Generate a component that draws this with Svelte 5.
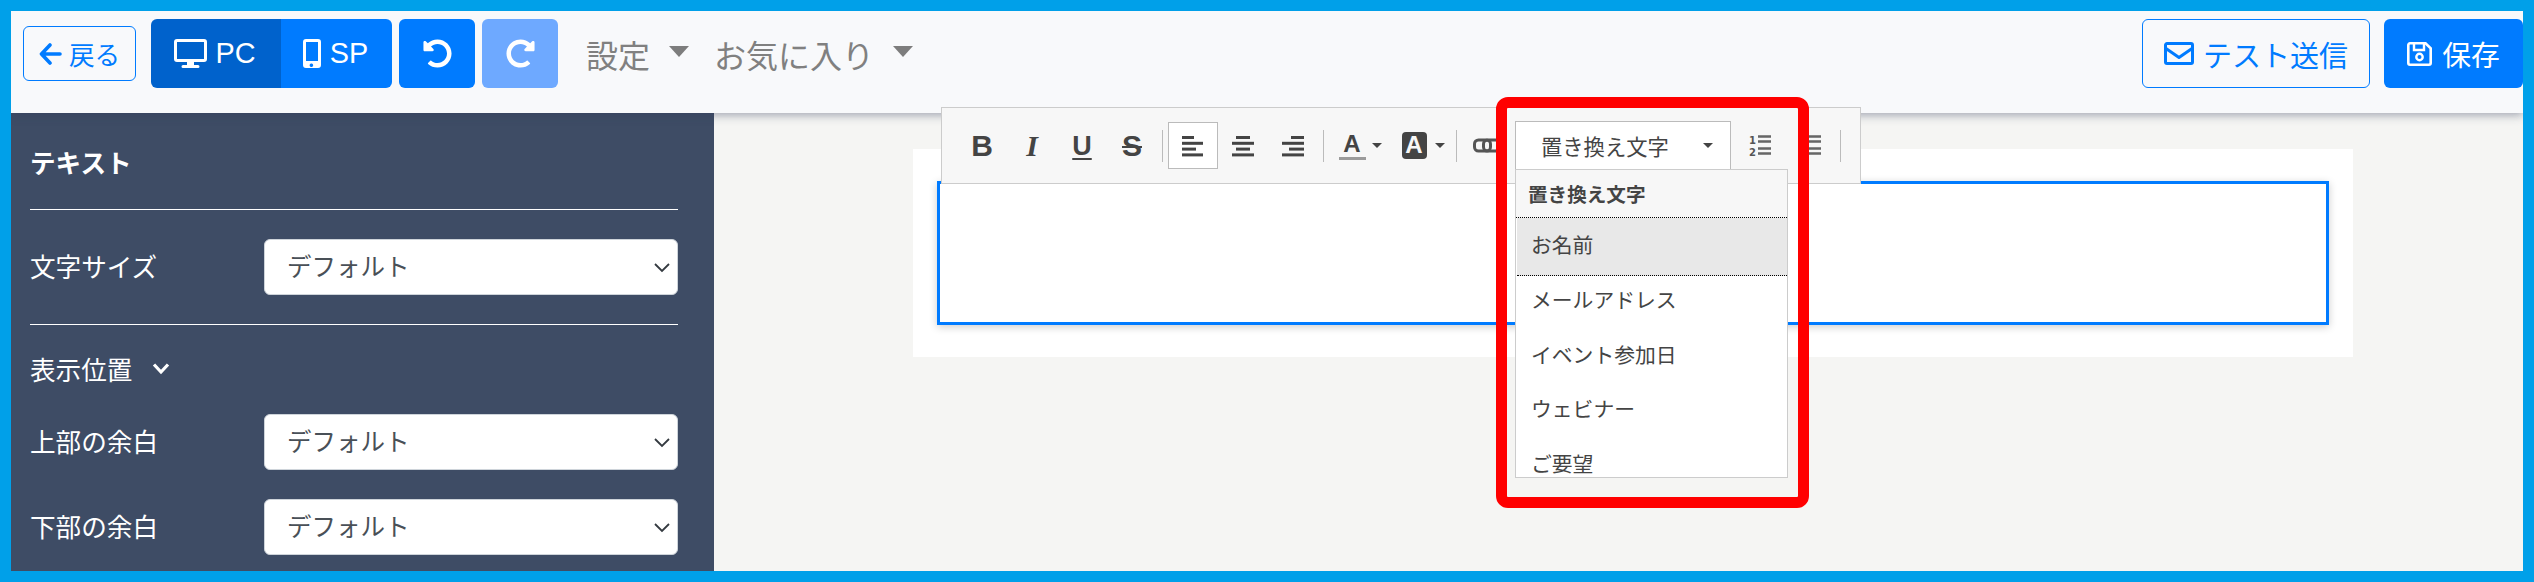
<script>
  const undoPath =
    "M255.545 8c-66.269.119-126.438 26.233-170.86 68.685L48.971 40.971C33.851 25.851 8 36.559 8 57.941V192c0 13.255 10.745 24 24 24h134.059c21.382 0 32.09-25.851 16.971-40.971l-41.75-41.75c30.864-28.899 70.801-44.907 113.23-45.273 92.398-.798 170.283 73.977 169.484 169.442C423.236 348.009 349.816 424 256 424c-41.127 0-79.997-14.678-110.63-41.556-4.743-4.161-11.906-3.908-16.368.553L89.34 422.659c-4.872 4.872-4.631 12.815.482 17.433C133.798 479.813 192.074 504 256 504c136.966 0 247.999-111.033 248-247.998C504.001 119.193 392.354 7.755 255.545 8z";

  const menuItems = ["メールアドレス", "イベント参加日", "ウェビナー", "ご要望"];

  const aligns = [
    { x: [0, 0, 0, 0], w: [12, 21, 14, 21], active: true },
    { x: [4, 0, 4, 0], w: [14, 22, 14, 22], active: false },
    { x: [9, 0, 7, 0], w: [13, 22, 15, 22], active: false },
  ];
</script>

<div class="page">
  <header class="navbar">
    <button class="btn outline back">
      <svg width="23" height="22" viewBox="0 0 23 22"><path d="M11 2 2.5 11l8.5 9M3 11h18" fill="none" stroke="currentColor" stroke-width="3.6" stroke-linecap="round" stroke-linejoin="round" /></svg>
      戻る
    </button>

    <div class="device">
      <button class="btn solid pc">
        <svg width="33" height="29" viewBox="0 0 33 29"><path d="M3 0h27a3 3 0 0 1 3 3v17a3 3 0 0 1-3 3H20v3h4a1.500 1.500 0 0 1 0 3H9a1.500 1.500 0 0 1 0-3h4v-3H3a3 3 0 0 1-3-3V3a3 3 0 0 1 3-3Zm0 3v17h27V3Z" fill="currentColor" fill-rule="evenodd" /></svg>
        PC
      </button>
      <button class="btn solid sp">
        <svg width="18" height="29" viewBox="0 0 18 29"><path d="M3 0h12a3 3 0 0 1 3 3v23a3 3 0 0 1-3 3H3a3 3 0 0 1-3-3V3a3 3 0 0 1 3-3Zm0 3v19h12V3Zm6 21.500a1.800 1.800 0 1 0 0 3.400 1.800 1.800 0 0 0 0-3.400Z" fill="currentColor" fill-rule="evenodd" /></svg>
        SP
      </button>
    </div>

    <button class="btn solid history">
      <svg width="29" height="29" viewBox="0 0 512 512"><path d={undoPath} fill="currentColor" /></svg>
    </button>
    <button class="btn solid history disabled">
      <svg class="flip" width="29" height="29" viewBox="0 0 512 512"><path d={undoPath} fill="currentColor" /></svg>
    </button>

    <div class="nav-menu first">設定<i class="nav-caret"></i></div>
    <div class="nav-menu">お気に入り<i class="nav-caret"></i></div>

    <button class="btn outline test">
      <svg width="30" height="23" viewBox="0 0 30 23"><path d="M3 1.500h24A1.500 1.500 0 0 1 28.500 3v17a1.500 1.500 0 0 1-1.500 1.500H3A1.500 1.500 0 0 1 1.500 20V3A1.500 1.500 0 0 1 3 1.500Zm-1 5 13 9 13-9" fill="none" stroke="currentColor" stroke-width="3" stroke-linejoin="round" /></svg>
      テスト送信
    </button>
    <button class="btn solid save">
      <svg width="25" height="24" viewBox="0 0 25 24"><path d="M3 1.300h15.500l5.200 5V21a1.700 1.700 0 0 1-1.700 1.700H3A1.700 1.700 0 0 1 1.300 21V3A1.700 1.700 0 0 1 3 1.300Z" fill="none" stroke="currentColor" stroke-width="2.600" /><path d="M7 2v6h10V2" fill="none" stroke="currentColor" stroke-width="2.400" /><circle cx="12.500" cy="15" r="3.200" fill="none" stroke="currentColor" stroke-width="2.400" /></svg>
      保存
    </button>
  </header>

  <div class="body">
    <aside class="sidebar">
      <h2>テキスト</h2>
      <hr />
      <div class="row">
        <span class="label">文字サイズ</span>
        <div class="select"><select><option>デフォルト</option></select><svg width="16" height="10" viewBox="0 0 16 10"><path d="M1 1l7 7 7-7" fill="none" stroke="#343a40" stroke-width="1.800" /></svg></div>
      </div>
      <hr class="second" />
      <div class="collapse">
        表示位置
        <svg width="18" height="13" viewBox="0 0 18 13"><path d="M2 2.500l7 7.500 7-7.500" fill="none" stroke="#fff" stroke-width="3.200" /></svg>
      </div>
      <div class="row">
        <span class="label">上部の余白</span>
        <div class="select"><select><option>デフォルト</option></select><svg width="16" height="10" viewBox="0 0 16 10"><path d="M1 1l7 7 7-7" fill="none" stroke="#343a40" stroke-width="1.800" /></svg></div>
      </div>
      <div class="row last">
        <span class="label">下部の余白</span>
        <div class="select"><select><option>デフォルト</option></select><svg width="16" height="10" viewBox="0 0 16 10"><path d="M1 1l7 7 7-7" fill="none" stroke="#343a40" stroke-width="1.800" /></svg></div>
      </div>
    </aside>

    <main class="main">
      <div class="card">
        <div class="editable"></div>
      </div>

      <div class="toolbar">
        <span class="tool"><span class="glyph b">B</span></span>
        <span class="tool"><span class="glyph i">I</span></span>
        <span class="tool"><span class="glyph u">U</span></span>
        <span class="tool"><span class="glyph s">S</span></span>
        <i class="sep"></i>
        {#each aligns as a}
          <span class="tool" class:active={a.active}>
            <svg width="22" height="22" viewBox="0 0 22 22">
              {#each a.w as w, n}
                <rect x={a.x[n]} y={n * 5.8 + 1} width={w} height="3" fill="#444" />
              {/each}
            </svg>
          </span>
        {/each}
        <i class="sep"></i>
        <span class="tool color fore"><span class="glyph a">A</span><i class="caret"></i></span>
        <span class="tool color backc"><span class="glyph a box">A</span><i class="caret"></i></span>
        <i class="sep"></i>
        <span class="tool">
          <svg width="28" height="16" viewBox="0 0 28 16"><rect x="1.500" y="2" width="16" height="11" rx="4" fill="none" stroke="#555" stroke-width="3" /><rect x="10.500" y="2" width="16" height="11" rx="4" fill="none" stroke="#555" stroke-width="3" /></svg>
        </span>

        <div class="dropdown">
          <button class="drop-btn">置き換え文字<i class="caret"></i></button>
          <div class="drop-menu">
            <div class="drop-head">置き換え文字</div>
            <div class="drop-item selected">お名前</div>
            {#each menuItems as item}
              <div class="drop-item">{item}</div>
            {/each}
          </div>
        </div>

        <span class="tool list">
          <svg width="25" height="24" viewBox="0 0 25 24">
            <text x="2" y="10" class="num">1</text>
            <text x="2" y="22" class="num">2</text>
            <path d="M11 2.500h13M11 7.500h13M11 14.500h13M11 19.500h13" stroke="#666" stroke-width="2.400" />
          </svg>
        </span>
        <span class="tool list">
          <svg width="25" height="24" viewBox="0 0 25 24">
            <path d="M10 2.500h14M10 7.500h14M10 14.500h14M10 19.500h14" stroke="#666" stroke-width="2.400" />
          </svg>
        </span>
        <i class="sep end"></i>
      </div>
    </main>
  </div>

  <!-- annotation frame from the manual -->
  <div class="highlight"></div>
</div>

<style>
  :global(body) {
    margin: 0;
  }

  .page {
    position: relative;
    box-sizing: border-box;
    width: 2534px;
    height: 582px;
    border: 11px solid #00a0e9;
    font-family: "Liberation Sans", "Noto Sans CJK JP", sans-serif;
    overflow: hidden;
  }

  .navbar {
    position: relative;
    z-index: 1;
    box-sizing: border-box;
    height: 102px;
    display: flex;
    align-items: flex-start;
    padding: 8px 0 0 12px;
    background: #f8f9fb;
    box-shadow: 0 2px 9px rgba(50, 60, 90, 0.45);
  }

  .btn {
    display: flex;
    align-items: center;
    justify-content: center;
    box-sizing: border-box;
    height: 69px;
    padding: 0;
    border: 0;
    border-radius: 6px;
    font-family: inherit;
    font-size: 28.8px;
    cursor: pointer;
  }

  .solid {
    background: #007bff;
    color: #fff;
  }

  .outline {
    background: transparent;
    border: 1px solid #007bff;
    color: #007bff;
  }

  .back {
    width: 113px;
    height: 55px;
    margin-top: 7px;
    gap: 7px;
    font-size: 25.6px;
  }

  .device {
    display: flex;
    margin-left: 15px;
    width: 241px;
  }

  .pc {
    width: 130px;
    gap: 8px;
    padding-right: 2px;
    background: #0062cc;
    border-radius: 6px 0 0 6px;
  }

  .sp {
    width: 111px;
    gap: 9px;
    padding-right: 2px;
    border-radius: 0 6px 6px 0;
  }

  .history {
    width: 76px;
    margin-left: 7px;
  }

  .disabled {
    background: #6ea9ff;
  }

  .flip {
    transform: scaleX(-1);
  }

  .nav-menu {
    display: flex;
    align-items: center;
    height: 69px;
    margin-left: 25px;
    color: #808080;
    font-size: 32px;
  }

  .nav-menu.first {
    margin-left: 28px;
  }

  .nav-caret {
    width: 0;
    height: 0;
    margin: 0 0 4px 19px;
    border-left: 10px solid transparent;
    border-right: 10px solid transparent;
    border-top: 11px solid #7d7d7d;
  }

  .test {
    width: 228px;
    margin-left: auto;
    gap: 9px;
    font-size: 29px;
  }

  .save {
    width: 139px;
    margin-left: 14px;
    gap: 10px;
  }

  .body {
    display: flex;
    height: 458px;
  }

  .sidebar {
    box-sizing: border-box;
    width: 703px;
    padding: 32px 36px 0 19px;
    background: #3e4c65;
    color: #fff;
    font-size: 25.6px;
  }

  h2 {
    margin: 0 0 26px;
    font-size: 25.6px;
    line-height: 38px;
    font-weight: 700;
  }

  hr {
    height: 1px;
    margin: 0 0 29px;
    border: 0;
    background: #fff;
  }

  hr.second {
    margin: 28px 0 24px;
  }

  .row {
    display: flex;
    align-items: center;
    margin-bottom: 29px;
  }

  .row.last {
    margin-bottom: 0;
  }

  .label {
    width: 234px;
    padding-bottom: 3px;
  }

  .select {
    position: relative;
    width: 414px;
    height: 56px;
  }

  .select select {
    display: block;
    width: 100%;
    height: 100%;
    padding: 0 22px;
    appearance: none;
    border: 1px solid #ced4da;
    border-radius: 6px;
    background: #fff;
    color: #495057;
    font-family: inherit;
    font-size: 24.5px;
  }

  .select svg {
    position: absolute;
    top: 24px;
    right: 8px;
    pointer-events: none;
  }

  .collapse {
    display: flex;
    align-items: center;
    gap: 20px;
    height: 38px;
    margin-bottom: 27px;
  }

  .main {
    position: relative;
    flex: 1;
    background: #f5f5f3;
  }

  .card {
    box-sizing: border-box;
    width: 1440px;
    height: 208px;
    margin: 36px 0 0 199px;
    padding: 32px 24px 0;
    background: #fff;
  }

  .editable {
    box-sizing: border-box;
    height: 144px;
    border: 3px solid #007bff;
    box-shadow: 0 2px 8px rgba(0, 0, 0, 0.2);
  }

  .toolbar {
    position: absolute;
    z-index: 2;
    left: 227px;
    top: -6px;
    box-sizing: border-box;
    width: 920px;
    height: 77px;
    display: flex;
    align-items: center;
    padding-left: 15px;
    background: #f7f7f7;
    border: 1px solid #ccc;
    color: #444;
  }

  .tool {
    display: flex;
    align-items: center;
    justify-content: center;
    flex: none;
    box-sizing: border-box;
    width: 50px;
    height: 47px;
  }

  .tool.active {
    background: #fff;
    border: 1px solid #bbb;
  }

  .glyph {
    font-family: "Liberation Sans", sans-serif;
    font-weight: 700;
    font-size: 30px;
    line-height: 30px;
  }

  .glyph.i {
    font-family: "Liberation Serif", serif;
    font-style: italic;
  }

  .glyph.u {
    text-decoration: underline;
    text-decoration-thickness: 2px;
    text-underline-offset: 3px;
    font-size: 27px;
  }

  .glyph.s {
    text-decoration: line-through;
    text-decoration-thickness: 2px;
  }

  .sep {
    flex: none;
    width: 1px;
    height: 32px;
    margin: 0 5px;
    background: #bbb;
  }

  .color {
    width: 62px;
    gap: 6px;
  }

  .backc {
    width: 60px;
    gap: 8px;
    padding-left: 4px;
  }

  .glyph.a {
    box-sizing: border-box;
    width: 27px;
    height: 27px;
    font-size: 24px;
    line-height: 25px;
    text-align: center;
  }

  .fore .glyph.a {
    border-bottom: 3px solid #9b9b9b;
    height: 29px;
  }

  .glyph.box {
    width: 25px;
    background: #444;
    color: #f7f7f7;
    border-radius: 4px;
  }

  .caret {
    display: inline-block;
    flex: none;
    width: 0;
    height: 0;
    border-left: 5px solid transparent;
    border-right: 5px solid transparent;
    border-top: 5px solid #444;
  }

  .dropdown {
    position: relative;
    flex: none;
    width: 216px;
    margin: 0 3px;
  }

  .drop-btn {
    display: flex;
    align-items: center;
    box-sizing: border-box;
    width: 100%;
    height: 49px;
    margin: 0;
    padding: 0 17px 0 25px;
    justify-content: space-between;
    background: #fff;
    border: 1px solid #bbb;
    color: #444;
    font-family: inherit;
    font-size: 21.3px;
  }

  .drop-menu {
    position: absolute;
    top: 48px;
    left: 0;
    box-sizing: border-box;
    width: 273px;
    height: 309px;
    overflow: hidden;
    background: #fff;
    border: 1px solid #ccc;
  }

  .drop-head {
    box-sizing: border-box;
    height: 48px;
    padding: 13px 0 0 12px;
    background: #f7f7f7;
    border-bottom: 1px dotted #000;
    font-size: 19.6px;
    line-height: 24px;
    font-weight: 700;
    color: #444;
  }

  .drop-item {
    box-sizing: border-box;
    height: 54.700px;
    padding-left: 15px;
    font-size: 20.8px;
    line-height: 50px;
    color: #444;
  }

  .drop-item.selected {
    height: 58px;
    line-height: 56px;
    margin-left: 1px;
    background: #e8e8e8;
    border-bottom: 1px dotted #000;
    padding-left: 14px;
  }

  .list {
    width: 50px;
  }

  .num {
    font-size: 10px;
    font-weight: 700;
    fill: #555;
    font-family: "DejaVu Sans", sans-serif;
  }

  .sep.end {
    margin-left: 6px;
  }

  .highlight {
    position: absolute;
    z-index: 3;
    left: 1485px;
    top: 86px;
    box-sizing: border-box;
    width: 313px;
    height: 411px;
    border: 11px solid #f00;
    border-radius: 12px;
    pointer-events: none;
  }
</style>
